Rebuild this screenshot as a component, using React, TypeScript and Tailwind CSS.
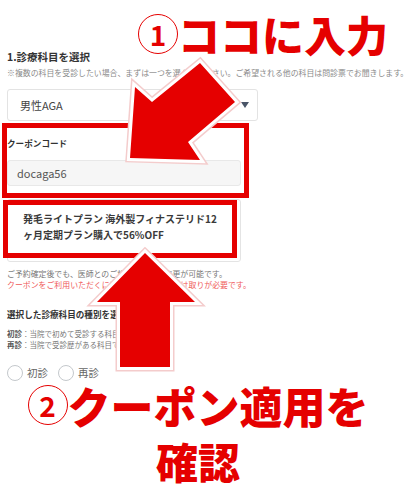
import React from 'react';

const RED = '#e50000';

const Radio: React.FC<{ label: string }> = ({ label }) => (
  <label className="flex items-center gap-[4px]">
    <span className="w-[16px] h-[16px] rounded-full border border-[#c4c8cc] bg-white" />
    <span className="text-[10.5px] leading-none text-[#666]">{label}</span>
  </label>
);

export default function App() {
  return (
    <div className="relative w-[420px] h-[500px] overflow-hidden bg-white font-['Noto_Sans_CJK_JP','Noto_Sans',sans-serif]">
      {/* Form */}
      <div className="px-[7px] pt-[50px]">
        <h2 className="text-[10.5px] font-bold leading-[14px] text-[#333]">1.診療科目を選択</h2>
        <p className="mt-[3px] text-[7.9px] leading-[12px] text-[#8a8a8a] whitespace-nowrap">
          ※複数の科目を受診したい場合、まずは一つを選んでください。ご希望される他の科目は問診票でお聞きします。
        </p>

        <div className="mt-[10px] h-[32px] w-[251px] border border-[#e3e3e3] rounded-[3px] flex items-center justify-between pl-[12px] pr-[8px]">
          <span className="text-[11px] text-[#444]">男性AGA</span>
          <svg width="8" height="6" viewBox="0 0 8 6">
            <path d="M0 0h8L4 6z" fill="#4a5568" />
          </svg>
        </div>

        <div className="mt-[15px] text-[8.6px] font-bold leading-[14px] text-[#333]">クーポンコード</div>
        <div className="mt-[10px] h-[26px] w-[234px] bg-[#f6f6f6] border border-[#e8e8e8] rounded-[3px] flex items-center pl-[9px]">
          <span className="text-[11px] text-[#555]">docaga56</span>
        </div>

        <div className="mt-[13px] h-[63px] w-[234px] border border-[#e4e4e4] rounded-[3px] pl-[15px] pt-[11px]">
          <p className="text-[10px] font-bold leading-[16px] text-[#3a3a3a] whitespace-nowrap">
            発毛ライトプラン 海外製フィナステリド12
            <br />
            ヶ月定期プラン購入で56%OFF
          </p>
        </div>

        <div className="mt-[6px] text-[7.9px] leading-[11px] whitespace-nowrap">
          <p className="text-[#777]">ご予約確定後でも、医師とのご相談で科目の変更が可能です。</p>
          <p className="text-[#ef5a5a]">クーポンをご利用いただくには、決済とお薬の受け取りが必要です。</p>
        </div>

        <div className="mt-[17px] text-[8.6px] font-bold leading-[14px] text-[#333]">選択した診療科目の種別を選択</div>
        <div className="mt-[7px] text-[7.5px] leading-[11px] text-[#777] whitespace-nowrap">
          <p><span className="font-bold text-[#555]">初診</span>：当院で初めて受診する科目です</p>
          <p><span className="font-bold text-[#555]">再診</span>：当院で受診歴がある科目です</p>
        </div>

        <div className="mt-[15px] flex items-center gap-[10px]">
          <Radio label="初診" />
          <Radio label="再診" />
        </div>
      </div>

      {/* Annotation boxes */}
      <div className="absolute left-[2px] top-[123px] w-[247px] h-[75px] border-[5px] border-[#e50000]" />
      <div className="absolute left-[3px] top-[200px] w-[234px] h-[58px] border-[5px] border-[#e50000]" />

      {/* Arrows */}
      <svg className="absolute inset-0 pointer-events-none" width="420" height="500" viewBox="0 0 420 500">
        <g strokeLinejoin="miter" strokeMiterlimit={6}>
          <polygon
            points="130,158 135,87 152,102 200,63 235,102 188,142 200,160"
            fill={RED}
            stroke="#f4cccc"
            strokeWidth="9"
          />
          <polygon
            points="130,158 135,87 152,102 200,63 235,102 188,142 200,160"
            fill={RED}
            stroke="#fff"
            strokeWidth="6"
          />
          <polygon points="130,158 135,87 152,102 200,63 235,102 188,142 200,160" fill={RED} />

          <polygon
            points="145,253 195,302 170,302 170,367 120,367 120,302 97,302"
            fill={RED}
            stroke="#f4cccc"
            strokeWidth="9"
          />
          <polygon
            points="145,253 195,302 170,302 170,367 120,367 120,302 97,302"
            fill={RED}
            stroke="#fff"
            strokeWidth="6"
          />
          <polygon points="145,253 195,302 170,302 170,367 120,367 120,302 97,302" fill={RED} />
        </g>
      </svg>

      {/* Callout 1 */}
      <div className="absolute left-[138px] top-[13px] flex items-center text-[#e50000]">
        <span className="w-[40px] h-[40px] rounded-full border-[1.5px] border-[#e50000] flex items-center justify-center text-[28px] font-bold leading-none">
          1
        </span>
        <span className="text-[42px] font-black leading-none">ココに入力</span>
      </div>

      {/* Callout 2 */}
      <div className="absolute left-0 top-[384px] w-[396px] text-center text-[#e50000]">
        <div className="h-[42px] flex items-center justify-center">
          <span className="w-[40px] h-[40px] rounded-full border-[1.5px] border-[#e50000] flex items-center justify-center text-[28px] font-bold leading-none">
            2
          </span>
          <span className="text-[43px] font-black leading-none">クーポン適用を</span>
        </div>
        <div className="mt-[14px] h-[42px] flex items-center justify-center">
          <span className="text-[42px] font-black leading-none">確認</span>
        </div>
      </div>
    </div>
  );
}
